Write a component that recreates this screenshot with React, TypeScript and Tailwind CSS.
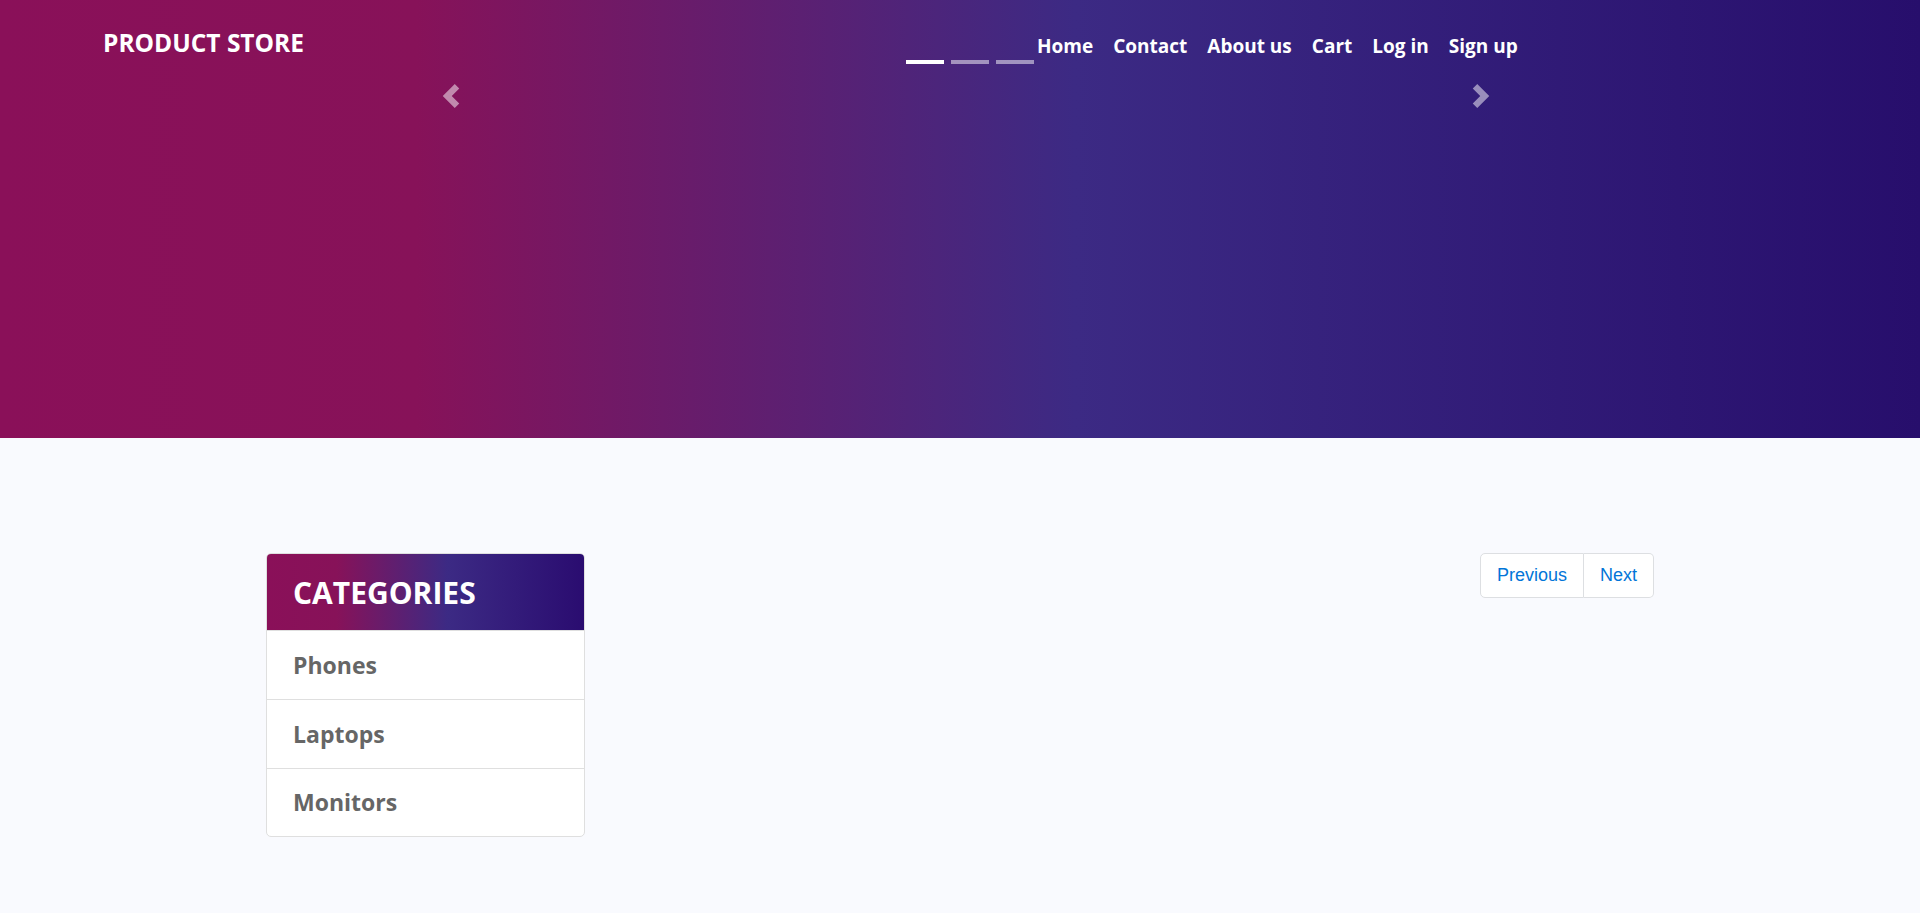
import React from 'react'

const navLinks = ['Home', 'Contact', 'About us', 'Cart', 'Log in', 'Sign up']
const categories = ['Phones', 'Laptops', 'Monitors']

function PrevIcon() {
  return (
    <svg viewBox="0 0 8 8" className="w-[24px] h-[24px]" fill="#fff">
      <path d="M5.25 0l-4 4 4 4 1.5-1.5L4.25 4l2.5-2.5L5.25 0z" />
    </svg>
  )
}

function NextIcon() {
  return (
    <svg viewBox="0 0 8 8" className="w-[24px] h-[24px]" fill="#fff">
      <path d="M2.75 0l-1.5 1.5L3.75 4l-2.5 2.5L2.75 8l4-4-4-4z" />
    </svg>
  )
}

export default function App() {
  return (
    <div className="min-h-screen bg-[#f9fafe] font-['Open_Sans',sans-serif]">
      {/* header + carousel */}
      <header className="relative h-[438px] bg-[linear-gradient(to_right,#8a1059_0%,#871259_21.7%,#3c2a84_56%,#270e6c_100%)]">
        <nav className="flex items-start">
          <div className="w-[1037px] shrink-0 pl-[103px] pt-[27px]">
            <a className="text-[24.5px] leading-[32px] font-bold text-white">PRODUCT STORE</a>
          </div>
          <ul className="flex gap-[20px] pt-[33px]">
            {navLinks.map(link => (
              <li key={link}>
                <a className="text-[19px] leading-[26px] font-bold text-white whitespace-nowrap">{link}</a>
              </li>
            ))}
          </ul>
        </nav>

        <div className="absolute left-[906px] top-[60px] flex gap-[7px]">
          <span className="w-[38px] h-[4px] bg-white" />
          <span className="w-[38px] h-[4px] bg-white/50" />
          <span className="w-[38px] h-[4px] bg-white/50" />
        </div>

        <button className="absolute left-[439px] top-[84px] opacity-50">
          <PrevIcon />
        </button>
        <button className="absolute left-[1469px] top-[84px] opacity-50">
          <NextIcon />
        </button>
      </header>

      {/* content */}
      <main className="mx-auto w-[1388px] pt-[115px] pb-[77px] flex items-start justify-between">
        <div className="w-[319px] bg-white border border-[#dfdfdf] rounded-[5px] overflow-hidden">
          <div className="h-[76px] flex items-center pl-[26px] bg-[linear-gradient(to_right,#8a1059_0%,#871259_22%,#3c2a84_57%,#2a0c70_100%)]">
            <span className="text-[30px] font-bold text-white">CATEGORIES</span>
          </div>
          {categories.map(cat => (
            <div
              key={cat}
              className="h-[69px] last:h-[68px] flex items-center pl-[26px] border-t border-[#dfdfdf]"
            >
              <span className="text-[23px] font-bold text-[#666]">{cat}</span>
            </div>
          ))}
        </div>

        <ul className="flex font-['Liberation_Sans',Arial,sans-serif] text-[18px] text-[#0275d8]">
          <li>
            <a className="h-[45px] flex items-center px-[16px] bg-white border border-[#dddfe2] rounded-l-[5px]">
              Previous
            </a>
          </li>
          <li>
            <a className="h-[45px] flex items-center px-[16px] bg-white border border-l-0 border-[#dddfe2] rounded-r-[5px]">
              Next
            </a>
          </li>
        </ul>
      </main>
    </div>
  )
}
